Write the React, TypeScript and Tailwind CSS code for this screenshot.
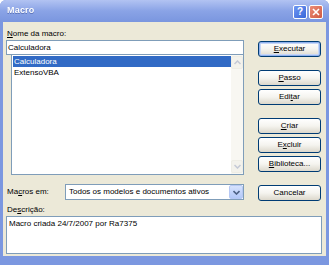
import React from "react";

const font = { fontFamily: '"Liberation Sans", Arial, sans-serif' };

const Btn: React.FC<{ children: React.ReactNode; def?: boolean; className?: string }> = ({
  children,
  def,
  className = "",
}) => (
  <div
    className={`h-[16px] w-[63px] flex items-center justify-center rounded-[3px] border border-[#003c74] bg-gradient-to-b from-white via-[#f5f4ef] to-[#dcd8cc] text-[8px] leading-none text-black ${
      def ? "shadow-[inset_0_0_0_1px_#8fb1ed,inset_0_0_0_2px_#c6d6f7]" : ""
    } ${className}`}
  >
    {children}
  </div>
);

const U: React.FC<{ children: React.ReactNode }> = ({ children }) => (
  <span className="underline underline-offset-[1px]">{children}</span>
);

export default function App() {
  return (
    <div
      className="w-[329px] h-[265px] flex flex-col bg-[#7b97e0] rounded-t-[6px] overflow-hidden select-none"
      style={font}
    >
      {/* Barra de título */}
      <div className="h-[22px] flex items-center bg-gradient-to-b from-[#b2c3f2] via-[#8aa3e6] to-[#7a96df] pl-[7px] pr-[6px]">
        <span className="text-white font-bold text-[9px] tracking-[0.2px] drop-shadow-[0_1px_0_#5a72b8]">Macro</span>
        <div className="ml-auto flex gap-[2px] mt-[2px]">
          <div className="w-[14px] h-[14px] rounded-[2px] border border-white bg-gradient-to-br from-[#6f97f2] to-[#3a66d9] flex items-center justify-center text-white font-bold text-[10px] leading-none">
            ?
          </div>
          <div className="w-[14px] h-[14px] rounded-[2px] border border-white bg-gradient-to-br from-[#ec8b77] to-[#cf5a42] flex items-center justify-center">
            <svg width="8" height="8" viewBox="0 0 8 8">
              <path d="M1 1 L7 7 M7 1 L1 7" stroke="white" strokeWidth="1.6" />
            </svg>
          </div>
        </div>
      </div>

      {/* Corpo */}
      <div className="flex-1 mx-[3px] mb-[9px] bg-[#ece9d8] flex flex-col pl-[3px] pr-[4px]">
        <div className="flex">
          {/* Coluna esquerda */}
          <div className="w-[238px] flex flex-col">
            <div className="mt-[6px] h-[11px] text-[8px] leading-[11px] pl-[1px]">
              <U>N</U>ome da macro:
            </div>
            <div className="mt-[1px] h-[15px] border border-[#7f9db9] bg-white text-[8px] leading-[13px] pl-[1px]">
              Calculadora
            </div>
            <div className="ml-[5px] h-[120px] border border-[#7f9db9] border-t-0 bg-white flex">
              <div className="flex-1 pt-[1px] pl-[1px] text-[8px]">
                <div className="h-[11px] leading-[11px] bg-[#316ac5] text-white pl-[1px]">Calculadora</div>
                <div className="h-[11px] leading-[11px] pl-[1px]">ExtensoVBA</div>
              </div>
              <div className="w-[12px] bg-[#f8f7f2] flex flex-col justify-between py-[1px]">
                <div className="h-[13px] flex items-center justify-center rounded-[2px] bg-[#f3f2ec] border border-[#eeede5]">
                  <svg width="7" height="5" viewBox="0 0 7 5">
                    <path d="M0.5 4 L3.5 1 L6.5 4" stroke="#c4c9d6" strokeWidth="1.5" fill="none" />
                  </svg>
                </div>
                <div className="h-[13px] flex items-center justify-center rounded-[2px] bg-[#f3f2ec] border border-[#eeede5]">
                  <svg width="7" height="5" viewBox="0 0 7 5">
                    <path d="M0.5 1 L3.5 4 L6.5 1" stroke="#c4c9d6" strokeWidth="1.5" fill="none" />
                  </svg>
                </div>
              </div>
            </div>
            <div className="mt-[9px] h-[16px] flex items-center">
              <span className="w-[59px] text-[8px] pl-[1px]">
                Ma<U>c</U>ros em:
              </span>
              <div className="flex-1 h-[16px] border border-[#7f9db9] bg-white flex items-center">
                <span className="flex-1 text-[8px] pl-[3px]">Todos os modelos e documentos ativos</span>
                <div className="w-[14px] h-[14px] rounded-[2px] border border-[#b6c8f4] bg-gradient-to-b from-[#d6e2fd] to-[#b3c8f8] flex items-center justify-center">
                  <svg width="7" height="5" viewBox="0 0 7 5">
                    <path d="M0.5 1 L3.5 4 L6.5 1" stroke="#4d6185" strokeWidth="1.6" fill="none" />
                  </svg>
                </div>
              </div>
            </div>
          </div>

          {/* Botões */}
          <div className="ml-[14px] flex flex-col">
            <Btn def className="mt-[19px]">
              <span><U>E</U>xecutar</span>
            </Btn>
            <Btn className="mt-[13px]">
              <span><U>P</U>asso</span>
            </Btn>
            <Btn className="mt-[3px]">
              <span>Edi<U>t</U>ar</span>
            </Btn>
            <Btn className="mt-[13px]">
              <span><U>C</U>riar</span>
            </Btn>
            <Btn className="mt-[3px]">
              <span>E<U>x</U>cluir</span>
            </Btn>
            <Btn className="mt-[3px]">
              <span><U>B</U>iblioteca...</span>
            </Btn>
            <Btn className="mt-[13px]">Cancelar</Btn>
          </div>
        </div>

        <div className="mt-[3px] h-[11px] text-[8px] leading-[11px] pl-[1px]">
          De<U>s</U>crição:
        </div>
        <div className="mt-[1px] w-[316px] h-[38px] border border-[#7f9db9] bg-white text-[8px] leading-[12px] pl-[2px] pt-[1px]">
          Macro criada 24/7/2007 por Ra7375
        </div>
      </div>
    </div>
  );
}
